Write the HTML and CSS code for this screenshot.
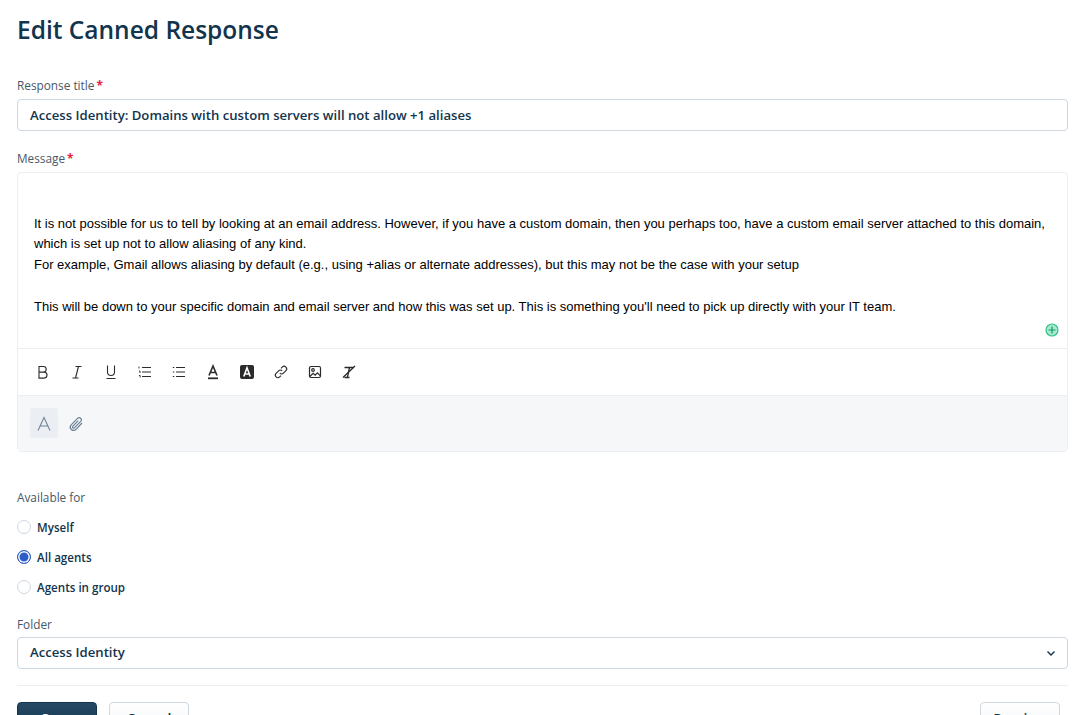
FILE: index.html
```html
<!DOCTYPE html>
<html lang="en">

<head>
    <meta charset="UTF-8">
    <title>Edit Canned Response</title>
    <link rel="stylesheet" href="styles.css">
</head>

<body>
    <main class="page">
        <h1>Edit Canned Response</h1>

        <form class="form">
            <label class="label label-title">Response title<span class="req">*</span></label>
            <div class="input">Access Identity: Domains with custom servers will not allow +1 aliases</div>

            <label class="label label-message">Message<span class="req">*</span></label>
            <section class="editor">
                <div class="editor-body">
                    <p>&nbsp;</p>
                    <p>It is not possible for us to tell by looking at an email address. However, if you have a custom domain, then you perhaps too, have a custom email server attached to this domain, which is set up not to allow aliasing of any kind.</p>
                    <p>For example, Gmail allows aliasing by default (e.g., using +alias or alternate addresses), but this may not be the case with your setup</p>
                    <p>&nbsp;</p>
                    <p>This will be down to your specific domain and email server and how this was set up. This is something you'll need to pick up directly with your IT team.</p>
                    <svg class="grammar" width="14" height="14" viewBox="0 0 14 14">
                        <circle cx="7" cy="7" r="6" fill="#a9e8cd" stroke="#2fc48d" stroke-width="1.2" />
                        <path d="M7 3.5v7M3.5 7h7" stroke="#0a9e68" stroke-width="1.2" fill="none" />
                    </svg>
                </div>

                <div class="toolbar">
                    <button type="button" class="tool">
                        <svg width="16" height="16" viewBox="0 0 16 16" fill="none" stroke="#2b2b2b" stroke-width="1.1">
                            <path d="M4 2.5h4.400a2.800 2.800 0 0 1 0 5.600H4zM4 8.100h5a3 3 0 0 1 0 6H4z" />
                        </svg>
                    </button>
                    <button type="button" class="tool">
                        <svg width="16" height="16" viewBox="0 0 16 16" fill="none" stroke="#2b2b2b" stroke-width="1.1">
                            <path d="M6.500 2.500h6M3.500 14h6M9.500 2.500L6.500 14" />
                        </svg>
                    </button>
                    <button type="button" class="tool">
                        <svg width="16" height="16" viewBox="0 0 16 16" fill="none" stroke="#2b2b2b" stroke-width="1.1">
                            <path d="M4.500 1.500v6.500a3.500 3.500 0 0 0 7 0V1.500M3.500 14.500h9" />
                        </svg>
                    </button>
                    <button type="button" class="tool">
                        <svg width="16" height="16" viewBox="0 0 16 16" fill="none" stroke="#2b2b2b" stroke-width="1">
                            <path d="M5 3.500h9M5 8h9M5 12.500h9" />
                            <path d="M2 2.500v2M2 7h1v2M2 11.500h1.200v2" stroke-width=".9" />
                        </svg>
                    </button>
                    <button type="button" class="tool">
                        <svg width="16" height="16" viewBox="0 0 16 16" fill="none" stroke="#2b2b2b" stroke-width="1">
                            <path d="M5 3.500h9M5 8h9M5 12.500h9M1.800 3.500h1.500M1.800 8h1.500M1.800 12.500h1.500" />
                        </svg>
                    </button>
                    <button type="button" class="tool">
                        <svg width="16" height="16" viewBox="0 0 16 16" fill="none" stroke="#2b2b2b">
                            <path d="M4 11.500L8 2l4 9.500M5.400 8.500h5.200" stroke-width="1.600" />
                            <path d="M3 14.300h10" stroke-width="1.800" />
                        </svg>
                    </button>
                    <button type="button" class="tool">
                        <svg width="16" height="16" viewBox="0 0 16 16" fill="none">
                            <rect x="1" y="1" width="14" height="14" rx="2" fill="#2b2b2b" />
                            <path d="M4.800 12.500L8 3.800l3.200 8.700M6 10h4" stroke="#fff" stroke-width="1.600" />
                        </svg>
                    </button>
                    <button type="button" class="tool">
                        <svg width="16" height="16" viewBox="0 0 16 16" fill="none" stroke="#2b2b2b" stroke-width="1.100">
                            <path d="M6.800 9.200a2.500 2.500 0 0 0 3.600 0l2.500-2.500a2.500 2.500 0 0 0-3.600-3.600L8 4.400" />
                            <path d="M9.200 6.800a2.500 2.500 0 0 0-3.600 0L3.100 9.300a2.500 2.500 0 0 0 3.600 3.600L8 11.600" />
                        </svg>
                    </button>
                    <button type="button" class="tool">
                        <svg width="16" height="16" viewBox="0 0 16 16" fill="none" stroke="#2b2b2b" stroke-width="1.200">
                            <rect x="2.500" y="2.500" width="11" height="11" rx="1.500" />
                            <circle cx="6" cy="6" r="1.300" />
                            <path d="M2.800 12.500l3.400-3.200 2 1.800 2.200-2.300 3 3" />
                        </svg>
                    </button>
                    <button type="button" class="tool">
                        <svg width="16" height="16" viewBox="0 0 16 16" fill="none" stroke="#2b2b2b" stroke-width="1.300">
                            <path d="M3.500 3.500h9M8.500 3.500L6.500 13M3.500 13.500h5" />
                            <path d="M2 13.500L14 2" />
                        </svg>
                    </button>
                </div>

                <div class="editor-footer">
                    <button type="button" class="footer-btn footer-btn-active">
                        <svg width="16" height="16" viewBox="0 0 16 16" fill="none" stroke="#6f8298" stroke-width="1.100">
                            <path d="M2 15.500L8 2.500l6 13M4.200 11h7.600" />
                        </svg>
                    </button>
                    <button type="button" class="footer-btn">
                        <svg width="16" height="16" viewBox="0 0 16 16" fill="none" stroke="#6f8298" stroke-width="1.200">
                            <path d="M14 8l-6 6.300a3.200 3.200 0 0 1-4.800-4.400l6.300-6.500a2.100 2.100 0 0 1 3.200 3L6.400 12.800a1 1 0 0 1-1.600-1.500l5.400-5.700" />
                        </svg>
                    </button>
                </div>
            </section>

            <label class="label label-available">Available for</label>
            <div class="radio-list">
                <div class="radio-row"><span class="radio"></span>Myself</div>
                <div class="radio-row"><span class="radio radio-on"></span>All agents</div>
                <div class="radio-row"><span class="radio"></span>Agents in group</div>
            </div>

            <label class="label label-folder">Folder</label>
            <div class="input select">
                Access Identity
                <svg width="10" height="10" viewBox="0 0 10 10" fill="none" stroke="#12344d" stroke-width="1.400">
                    <path d="M1.500 3.500L5 7l3.500-3.500" />
                </svg>
            </div>

            <div class="actions">
                <button type="button" class="btn btn-primary">Save</button>
                <button type="button" class="btn">Cancel</button>
                <button type="button" class="btn btn-preview">Preview</button>
            </div>
        </form>
    </main>
</body>

</html>
```

FILE: styles.css
```css
html,
body {
    height: 715px;
    margin: 0;
    overflow: hidden;
    background: #fff;
}

body {
    font-family: "Open Sans", "Noto Sans", sans-serif;
    color: #12344d;
}

.page {
    padding: 0 21px 0 17px;
}

h1 {
    margin: 0;
    padding-top: 14px;
    font-size: 24.5px;
    line-height: 32px;
    font-weight: 600;
}

.form {
    display: block;
}

.label {
    display: block;
    font-size: 11.8px;
    line-height: 16px;
    font-weight: 500;
    color: #475867;
}

.label-title {
    margin-top: 31px;
    margin-bottom: 6px;
}

.label-message {
    margin-top: 19px;
    margin-bottom: 6px;
}

.label-available {
    margin-top: 37px;
}

.label-folder {
    margin-top: 14px;
    margin-bottom: 5px;
}

.req {
    color: #e0243f;
    margin-left: 2px;
    font-weight: 700;
}

.input {
    box-sizing: border-box;
    height: 32px;
    padding: 0 12px;
    border: 1px solid #cfd7df;
    border-radius: 4px;
    font-size: 13.150px;
    line-height: 30px;
    font-weight: 600;
}

.select {
    display: flex;
    justify-content: space-between;
    align-items: center;
    padding-right: 11px;
    padding-bottom: 2px;
}

.select svg {
    margin-top: 2px;
}

.editor {
    border: 1px solid #ebeff3;
    border-radius: 4px;
}

.editor-body {
    position: relative;
    box-sizing: border-box;
    height: 176px;
    padding: 20px 16px 0;
    font-family: "Liberation Sans", Arial, sans-serif;
    font-size: 13px;
    line-height: 20.700px;
    color: #000;
    border-bottom: 1px solid #ebeff3;
}

.editor-body p {
    margin: 0;
}

.grammar {
    position: absolute;
    right: 8px;
    bottom: 11px;
}

.toolbar {
    display: flex;
    align-items: center;
    height: 46px;
    padding-left: 13px;
    gap: 10px;
}

.tool {
    display: flex;
    width: 24px;
    height: 24px;
    padding: 0;
    align-items: center;
    justify-content: center;
    background: none;
    border: none;
}

.editor-footer {
    display: flex;
    align-items: center;
    height: 56px;
    padding-left: 12px;
    padding-bottom: 2px;
    gap: 4px;
    background: #f5f7f9;
    border-top: 1px solid #ebeff3;
    box-sizing: border-box;
}

.footer-btn {
    display: flex;
    width: 28px;
    height: 30px;
    padding: 0;
    align-items: center;
    justify-content: center;
    background: none;
    border: none;
    border-radius: 2px;
}

.footer-btn-active {
    background: #ebeff3;
}

.radio-list {
    display: flex;
    flex-direction: column;
    margin-top: 7px;
}

.radio-row {
    display: flex;
    align-items: center;
    gap: 6px;
    height: 30px;
    font-size: 11.600px;
    font-weight: 600;
}

.radio {
    box-sizing: border-box;
    width: 14px;
    height: 14px;
    border: 1px solid #cfd7df;
    border-radius: 50%;
    background: #fff;
}

.radio-on {
    border-color: #2c5cc5;
    background: #2c5cc5;
    box-shadow: inset 0 0 0 1.500px #fff;
}

.actions {
    display: flex;
    gap: 12px;
    margin-top: 16px;
    padding: 16px 8px 0 0;
    border-top: 1px solid #ebeff3;
}

.btn {
    box-sizing: border-box;
    width: 80px;
    height: 32px;
    border: 1px solid #cfd7df;
    border-radius: 4px;
    background: linear-gradient(#fff, #f3f5f7);
    font-family: inherit;
    font-size: 14px;
    font-weight: 600;
    color: #12344d;
}

.btn-primary {
    border-color: #12344d;
    background: linear-gradient(#264966, #12344d);
    color: #fff;
}

.btn-preview {
    margin-left: auto;
}
```
